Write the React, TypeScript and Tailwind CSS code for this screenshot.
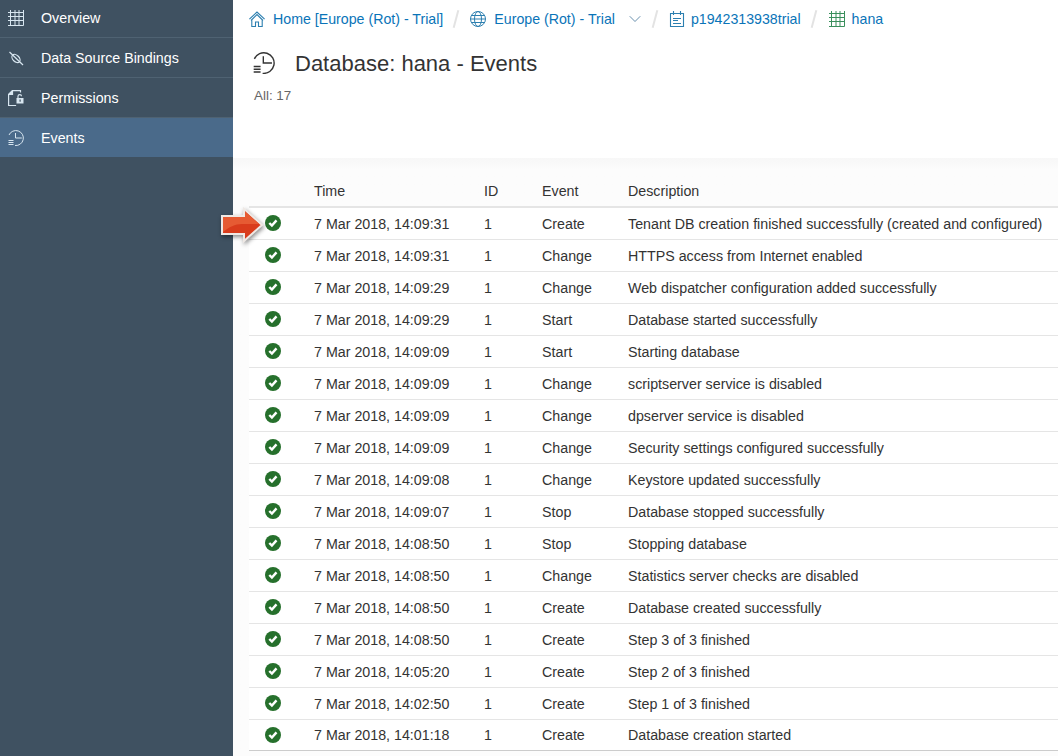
import { ChevronDown } from "lucide-react";

const rows = [
  ["7 Mar 2018, 14:09:31", "Create", "Tenant DB creation finished successfully (created and configured)"],
  ["7 Mar 2018, 14:09:31", "Change", "HTTPS access from Internet enabled"],
  ["7 Mar 2018, 14:09:29", "Change", "Web dispatcher configuration added successfully"],
  ["7 Mar 2018, 14:09:29", "Start", "Database started successfully"],
  ["7 Mar 2018, 14:09:09", "Start", "Starting database"],
  ["7 Mar 2018, 14:09:09", "Change", "scriptserver service is disabled"],
  ["7 Mar 2018, 14:09:09", "Change", "dpserver service is disabled"],
  ["7 Mar 2018, 14:09:09", "Change", "Security settings configured successfully"],
  ["7 Mar 2018, 14:09:08", "Change", "Keystore updated successfully"],
  ["7 Mar 2018, 14:09:07", "Stop", "Database stopped successfully"],
  ["7 Mar 2018, 14:08:50", "Stop", "Stopping database"],
  ["7 Mar 2018, 14:08:50", "Change", "Statistics server checks are disabled"],
  ["7 Mar 2018, 14:08:50", "Create", "Database created successfully"],
  ["7 Mar 2018, 14:08:50", "Create", "Step 3 of 3 finished"],
  ["7 Mar 2018, 14:05:20", "Create", "Step 2 of 3 finished"],
  ["7 Mar 2018, 14:02:50", "Create", "Step 1 of 3 finished"],
  ["7 Mar 2018, 14:01:18", "Create", "Database creation started"],
];

function GridIcon({ className }: { className?: string }) {
  return (
    <svg viewBox="0 0 16 16" className={className} fill="none" stroke="currentColor" strokeWidth="1">
      <path d="M2.5 2.5h13v13h-13zM0 2.5h3M0 6.5h15.5M0 10.5h15.5M0 15.5h3M2.5 0v3M7 0v15.5M11 0v15.5M15.5 0v3" />
    </svg>
  );
}

function PlugIcon({ className }: { className?: string }) {
  return (
    <svg viewBox="0 0 16 16" className={className} fill="none" stroke="currentColor" strokeWidth="1.2">
      <path d="M1.5 2l13.5 13" />
      <ellipse cx="8" cy="8.5" rx="3.2" ry="4.8" transform="rotate(-45 8 8.5)" />
    </svg>
  );
}

function LockDocIcon({ className }: { className?: string }) {
  return (
    <svg viewBox="0 0 16 16" className={className} fill="none" stroke="currentColor" strokeWidth="1.2">
      <path d="M12.5 2.5V.6H4.5L.6 4.5v11h7.5" />
      <path d="M4.5 .6L.6 4.5h3.9z" fill="currentColor" />
      <path d="M10 8V6.2c0-2.2 3.5-2.2 3.5 0" />
      <rect x="8.5" y="8" width="7" height="5.5" fill="currentColor" stroke="none" />
      <rect x="11.5" y="9.5" width="1.2" height="2.2" fill="#3f5161" stroke="none" />
    </svg>
  );
}

function HistoryIcon({ className }: { className?: string }) {
  return (
    <svg viewBox="0 0 16 16" className={className} fill="none" stroke="currentColor" strokeWidth="1">
      <path d="M1 5A7.5 7.5 0 1 1 7 15.5M7.5 3V8h6.3" />
      <path d="M.5 10.5h5M.5 12.5h5M.5 14.5h5" />
    </svg>
  );
}

function HomeIcon({ className }: { className?: string }) {
  return (
    <svg viewBox="0 0 16 16" className={className} fill="none" stroke="currentColor" strokeWidth="1.1">
      <path d="M.4 8.2L8 1l7.6 7.2M2 9.5L8 3.6l6 5.9M2.8 8.5v7h3.7v-4.5h3v4.5h3.7v-7" />
    </svg>
  );
}

function GlobeIcon({ className }: { className?: string }) {
  return (
    <svg viewBox="0 0 16 16" className={className} fill="none" stroke="currentColor" strokeWidth="1">
      <circle cx="8" cy="8" r="7.5" />
      <ellipse cx="8" cy="8" rx="3.5" ry="7.5" />
      <path d="M.5 8h15M1.5 4.5h13M1.5 11.5h13" />
    </svg>
  );
}

function SubaccountIcon({ className }: { className?: string }) {
  return (
    <svg viewBox="0 0 16 16" className={className} fill="none" stroke="currentColor" strokeWidth="1.1">
      <path d="M1.5 2.5h13v13h-13zM4.5 0v4M11.5 0v4M4 7.5h8M4 9.5h5M4 12.5h8" />
    </svg>
  );
}

function StatusIcon() {
  return (
    <svg viewBox="0 0 16 16" className="-mt-px h-4 w-4">
      <circle cx="8" cy="8" r="8" fill="#26702c" />
      <path d="M4.3 8l2.6 2.6 4.6-5.2" fill="none" stroke="#fff" strokeWidth="2.4" />
    </svg>
  );
}

function Arrow() {
  return (
    <svg
      viewBox="0 0 46 38"
      className="absolute left-[-30px] top-[-9px] h-[38px] w-[46px] drop-shadow-[1px_2px_2px_rgba(0,0,0,0.45)]"
    >
      <path d="M3 9h22V2l18 16-18 16v-7H3z" fill="#d93c1c" stroke="#efe9e5" strokeWidth="2" />
      <path d="M4 10h22V4.2L40 17H23c-7 0-13 3-19 8z" fill="#e65b33" />
    </svg>
  );
}

function SideItem({ label, active, children }: { label: string; active?: boolean; children: React.ReactNode }) {
  return (
    <div className={`flex h-10 items-center border-b ${active ? "border-[#3f5161] bg-[#4a6a8a]" : "border-[#4f6272]"}`}>
      <span className="flex w-[41px] justify-center pr-[9px] text-[#d8e6f0]">{children}</span>
      <span className="pt-[2px] text-[14.25px] text-white">{label}</span>
    </div>
  );
}

function Slash() {
  return <span className="ml-[12px] mr-[13px] h-[18px] w-[2px] rotate-[15deg] bg-[#e3e3e3]" />;
}

export default function App() {
  return (
    <div className="flex h-[756px] w-[1058px] overflow-hidden bg-white font-['Liberation_Sans',Arial,sans-serif] text-[14.25px] text-[#333]">
      <aside className="h-full w-[233px] shrink-0 bg-[#3f5161]">
        <div className="-mt-[2px]">
          <SideItem label="Overview"><GridIcon className="h-4 w-4" /></SideItem>
          <SideItem label="Data Source Bindings"><PlugIcon className="h-4 w-4" /></SideItem>
          <SideItem label="Permissions"><LockDocIcon className="h-4 w-4" /></SideItem>
          <SideItem label="Events" active><HistoryIcon className="h-4 w-4" /></SideItem>
        </div>
      </aside>
      <main className="flex min-w-0 flex-1 flex-col">
        <header className="h-[158px] shrink-0 pl-4">
          <nav className="flex h-[38px] items-center whitespace-nowrap text-[14.2px] text-[#0a74b8]">
            <HomeIcon className="mr-2 h-4 w-4 text-[#2c7fb0]" />
            <span className="pt-[2px]">Home [Europe (Rot) - Trial]</span>
            <Slash />
            <GlobeIcon className="mr-2 h-4 w-4 text-[#2c7fb0]" />
            <span className="pt-[2px]">Europe (Rot) - Trial</span>
            <ChevronDown className="-mr-[3px] ml-[10px] h-5 w-5 text-[#4b7a9e]" strokeWidth={1} />
            <Slash />
            <SubaccountIcon className="mr-[6px] h-4 w-4 text-[#2c7fb0]" />
            <span className="pt-[2px]">p1942313938trial</span>
            <Slash />
            <GridIcon className="ml-[1px] mr-[7px] h-4 w-4 text-[#3a8f5c]" />
            <span className="pt-[2px]">hana</span>
          </nav>
          <div className="mt-[9px] flex h-8 items-center pl-[4px]">
            <HistoryIcon className="h-[22px] w-[22px] text-[#333]" />
            <h1 className="ml-[20px] text-[22px] text-[#333]">Database: hana - Events</h1>
          </div>
          <p className="mt-[7px] pl-[5px] text-[13.4px] text-[#666]">All: 17</p>
        </header>
        <section className="flex-1 bg-gradient-to-b from-[#f7f7f7] to-[#fcfcfc] to-[12px] pl-4">
          <div className="grid h-[50px] grid-cols-[65px_170px_58px_86px_1fr] items-end border-b-2 border-[#e5e5e5] pb-[4px]">
            <span />
            <span>Time</span>
            <span>ID</span>
            <span>Event</span>
            <span>Description</span>
          </div>
          {rows.map((r, i) => (
            <div key={i} className={`grid grid-cols-[65px_170px_58px_86px_1fr] items-center border-b bg-white ${i === 16 ? "h-[31px] border-[#cccccc]" : "h-8 border-[#e5e5e5]"}`}>
              <span className="relative pl-4">
                <StatusIcon />
                {i === 0 && <Arrow />}
              </span>
              <span className="pt-[2px]">{r[0]}</span>
              <span className="pt-[2px]">1</span>
              <span className="pt-[2px]">{r[1]}</span>
              <span className="whitespace-nowrap pt-[2px]">{r[2]}</span>
            </div>
          ))}
        </section>
      </main>
    </div>
  );
}
